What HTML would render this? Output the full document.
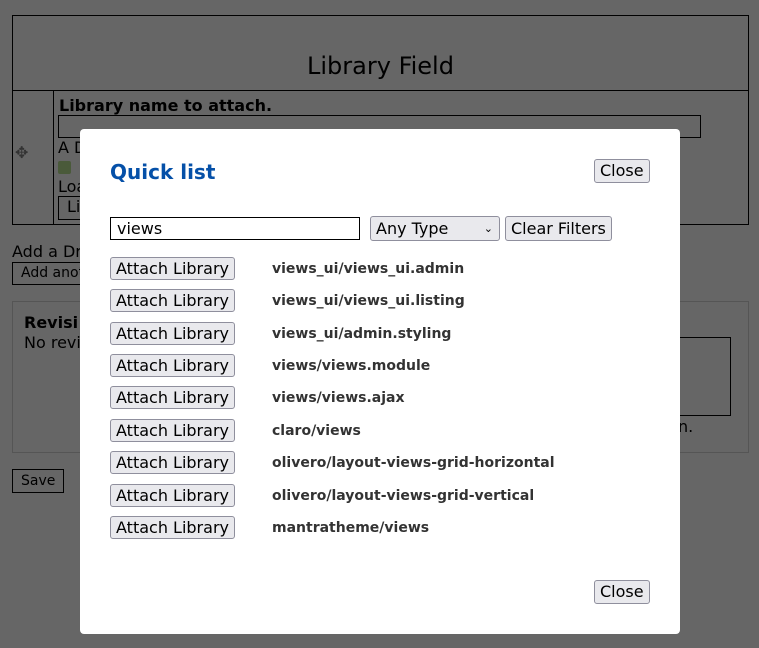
<!DOCTYPE html>
<html><head><style>
body{margin:0;width:759px;height:648px;background:#666;font-family:"DejaVu Sans","Liberation Sans",sans-serif;position:relative;overflow:hidden;color:#000}
.a{position:absolute}
.bb{border:1px solid #000;box-sizing:border-box}
.btn{position:absolute;box-sizing:border-box;background:#e9e9ed;border:1px solid #8f8f9d;border-radius:3px;font-size:16px;line-height:21px;padding:0 5px;color:#000;white-space:nowrap}
.lab{position:absolute;left:272px;font-weight:bold;font-size:14px;color:#333}
</style></head><body>
<div class="a bb" style="left:12px;top:15px;width:737px;height:210px"></div>
<div class="a" style="left:12px;top:90px;width:737px;border-top:1px solid #000"></div>
<div class="a" style="left:53px;top:91px;height:133px;border-left:1px solid #000"></div>
<div class="a" style="left:12px;top:52px;width:737px;text-align:center;font-size:24px">Library Field</div>
<div class="a" style="left:15px;top:143px;font-size:16px;color:#333">✥</div>
<div class="a" style="left:59px;top:96px;font-size:16px;font-weight:bold">Library name to attach.</div>
<div class="a bb" style="left:58px;top:115px;width:643px;height:23px"></div>
<div class="a" style="left:58px;top:138px;font-size:16px">A D</div>
<div class="a" style="left:58px;top:161px;width:13px;height:13px;background:#4a5a3a;border-radius:2px"></div>
<div class="a" style="left:58px;top:177px;font-size:16px">Loa</div>
<div class="a bb" style="left:58px;top:196px;width:40px;height:24px;font-size:16px;padding-left:8px">Li</div>
<div class="a" style="left:12px;top:242px;font-size:16px">Add a Dr</div>
<div class="a bb" style="left:12px;top:262px;width:90px;height:23px;font-size:14px;padding:2px 8px;white-space:nowrap;overflow:hidden">Add another</div>
<div class="a" style="left:12px;top:301px;width:737px;height:152px;border:1px solid #555;box-sizing:border-box"></div>
<div class="a" style="left:24px;top:313px;font-size:16px;font-weight:bold">Revisi</div>
<div class="a" style="left:24px;top:333px;font-size:16px">No revi</div>
<div class="a bb" style="left:660px;top:337px;width:71px;height:79px"></div>
<div class="a" style="left:678px;top:417px;font-size:16px">n.</div>
<div class="a bb" style="left:12px;top:469px;width:52px;height:24px;font-size:14px;padding:3px 8px">Save</div>

<div class="a" style="left:80px;top:129px;width:600px;height:505px;background:#fff;border-radius:4px"></div>
<div class="a" style="left:110px;top:160px;font-size:20px;font-weight:bold;color:#0550a8">Quick list</div>
<div class="btn" style="left:594px;top:159px;width:56px;height:24px">Close</div>
<div class="a bb" style="left:110px;top:217px;width:250px;height:23px;font-size:16px;padding:1px 6px">views</div>
<div class="btn" style="left:370px;top:216px;width:130px;height:25px;line-height:23px">Any Type<span style="position:absolute;right:6px;font-size:11px">⌄</span></div>
<div class="btn" style="left:505px;top:216px;width:107px;height:25px;line-height:23px">Clear Filters</div>

<div class="btn" style="left:110px;top:257px;height:23px">Attach Library</div><div class="lab" style="top:261px">views_ui/views_ui.admin</div>
<div class="btn" style="left:110px;top:289px;height:23px">Attach Library</div><div class="lab" style="top:293px">views_ui/views_ui.listing</div>
<div class="btn" style="left:110px;top:322px;height:23px">Attach Library</div><div class="lab" style="top:326px">views_ui/admin.styling</div>
<div class="btn" style="left:110px;top:354px;height:23px">Attach Library</div><div class="lab" style="top:358px">views/views.module</div>
<div class="btn" style="left:110px;top:386px;height:23px">Attach Library</div><div class="lab" style="top:390px">views/views.ajax</div>
<div class="btn" style="left:110px;top:419px;height:23px">Attach Library</div><div class="lab" style="top:423px">claro/views</div>
<div class="btn" style="left:110px;top:451px;height:23px">Attach Library</div><div class="lab" style="top:455px">olivero/layout-views-grid-horizontal</div>
<div class="btn" style="left:110px;top:484px;height:23px">Attach Library</div><div class="lab" style="top:488px">olivero/layout-views-grid-vertical</div>
<div class="btn" style="left:110px;top:516px;height:23px">Attach Library</div><div class="lab" style="top:520px">mantratheme/views</div>
<div class="btn" style="left:594px;top:580px;width:56px;height:24px">Close</div>
</body></html>
